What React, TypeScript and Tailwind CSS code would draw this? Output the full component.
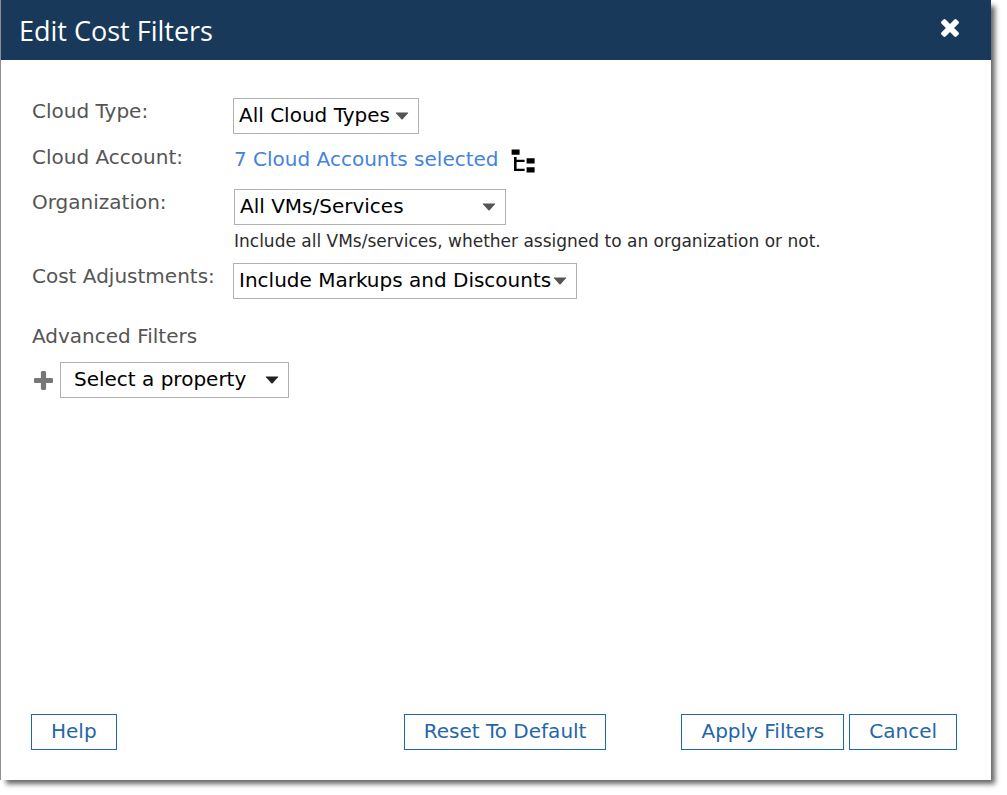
import { useId, useState } from "react";

type SelectBoxProps = {
  id: string;
  options: string[];
  className: string;
  arrowClassName?: string;
};

const buttonClass =
  "h-9 border border-[#1f66ad] bg-white px-[19px] pb-[2px] text-xl leading-[32px] whitespace-nowrap text-[#2566a8] hover:bg-blue-50";

const labelClass = "text-xl leading-[26px] text-[#555555]";

function SelectBox({
  id,
  options,
  className,
  arrowClassName = "text-[#555555]",
}: SelectBoxProps) {
  const [value, setValue] = useState(options[0]);

  return (
    <div className="relative w-fit max-w-full">
      <select
        id={id}
        value={value}
        onChange={(e) => setValue(e.target.value)}
        className={`block h-9 max-w-full appearance-none rounded-none border border-[#b0b0b0] bg-white pb-[2px] text-xl text-black ${className}`}
      >
        {options.map((option) => (
          <option key={option}>{option}</option>
        ))}
      </select>
      <svg
        viewBox="0 0 14 8"
        className={`pointer-events-none absolute top-[14px] right-[10px] h-2 w-[14px] ${arrowClassName}`}
        aria-hidden="true"
      >
        <path d="M1.2 0.5h11.6q0.8 0 0.2 0.8L7.6 7.3q-0.6 0.6-1.2 0L1 1.3Q0.4 0.5 1.2 0.5z" fill="currentColor" />
      </svg>
    </div>
  );
}

function CloseIcon() {
  return (
    <svg viewBox="302 366 1188 1188" className="h-[18px] w-[18px]" aria-hidden="true">
      <path
        fill="currentColor"
        d="M1490 1322q0 40-28 68l-136 136q-28 28-68 28t-68-28l-294-294-294 294q-28 28-68 28t-68-28l-136-136q-28-28-28-68t28-68l294-294-294-294q-28-28-28-68t28-68l136-136q28-28 68-28t68 28l294 294 294-294q28-28 68-28t68 28l136 136q28 28 28 68t-28 68l-294 294 294 294q28 28 28 68z"
      />
    </svg>
  );
}

function PlusIcon() {
  return (
    <svg viewBox="192 128 1408 1408" className="h-[19px] w-[19px]" aria-hidden="true">
      <path
        fill="currentColor"
        d="M1600 736v192q0 40-28 68t-68 28h-416v416q0 40-28 68t-68 28h-192q-40 0-68-28t-28-68v-416h-416q-40 0-68-28t-28-68v-192q0-40 28-68t68-28h416v-416q0-40 28-68t68-28h192q40 0 68 28t28 68v416h416q40 0 68 28t28 68z"
      />
    </svg>
  );
}

function TreeIcon() {
  return (
    <svg viewBox="0 0 24 24" className="h-6 w-6" fill="#000000" aria-hidden="true">
      <path d="M0.6 0.6h8v5.2h-8z" />
      <path d="M3 8h2.6v2.7h8v2.2H5.6v6.8h8v2.3H3z" />
      <path d="M15.6 9.3h8v5.3h-8zM15.6 18.3h8v5.3h-8z" />
    </svg>
  );
}

export default function App() {
  const id = useId();

  return (
    <div className="flex min-h-screen bg-white pr-4 pb-[15px] font-[family-name:'DejaVu_Sans',Verdana,sans-serif]">
      <form
        onSubmit={(e) => e.preventDefault()}
        className="flex flex-1 flex-col border-l border-[#8f8f8f] bg-white shadow-[5px_5px_5px_-1px_rgba(0,0,0,0.6)]"
      >
        <header className="flex h-[60px] items-center justify-between bg-[#18395a] pr-8 pl-[18px] text-white">
          <h1 className="pt-[2px] font-[family-name:'Open_Sans','Noto_Sans',sans-serif] text-[27px] leading-8">
            Edit Cost Filters
          </h1>
          <button type="button" aria-label="Close" className="pb-1">
            <CloseIcon />
          </button>
        </header>

        <div className="flex flex-1 flex-col px-[31px] pt-[38px]">
          <div className="grid grid-cols-[201px_1fr] gap-y-[10px]">
            <label htmlFor={`${id}-type`} className={labelClass}>
              Cloud Type:
            </label>
            <SelectBox
              id={`${id}-type`}
              options={["All Cloud Types"]}
              className="w-[186px] pl-[5px]"
            />

            <span className={labelClass}>Cloud Account:</span>
            <div className="flex h-[35px] items-start gap-3 pl-[1px]">
              <a href="#accounts" className="text-xl leading-[30px] text-[#4383e0] hover:underline">
                7 Cloud Accounts selected
              </a>
              <button type="button" aria-label="Browse cloud accounts" className="pt-[5px]">
                <TreeIcon />
              </button>
            </div>

            <label htmlFor={`${id}-org`} className={labelClass}>
              Organization:
            </label>
            <div className="pl-[1px]">
              <SelectBox
                id={`${id}-org`}
                options={["All VMs/Services"]}
                className="w-[272px] pl-[5px]"
              />
              <p className="mt-[5px] text-[17px] leading-[23px] text-[#2b2b2b]">
                Include all VMs/services, whether assigned to an organization or not.
              </p>
            </div>

            <label htmlFor={`${id}-cost`} className={labelClass}>
              Cost Adjustments:
            </label>
            <SelectBox
              id={`${id}-cost`}
              options={["Include Markups and Discounts"]}
              className="w-[344px] pl-[5px]"
            />
          </div>

          <label htmlFor={`${id}-property`} className={`mt-6 ${labelClass}`}>
            Advanced Filters
          </label>
          <div className="mt-[13px] flex items-center gap-[7px] pl-[2px]">
            <button type="button" aria-label="Add filter" className="text-[#777777]">
              <PlusIcon />
            </button>
            <SelectBox
              id={`${id}-property`}
              options={["Select a property"]}
              className="w-[229px] pl-[13px]"
              arrowClassName="text-[#222222]"
            />
          </div>
        </div>

        <footer className="flex items-center pr-[34px] pb-[30px] pl-[30px]">
          <button type="button" className={buttonClass}>
            Help
          </button>
          <button type="reset" className={`mr-[75px] ml-auto ${buttonClass}`}>
            Reset To Default
          </button>
          <div className="flex gap-[5px]">
            <button type="submit" className={buttonClass}>
              Apply Filters
            </button>
            <button type="button" className={buttonClass}>
              Cancel
            </button>
          </div>
        </footer>
      </form>
    </div>
  );
}
